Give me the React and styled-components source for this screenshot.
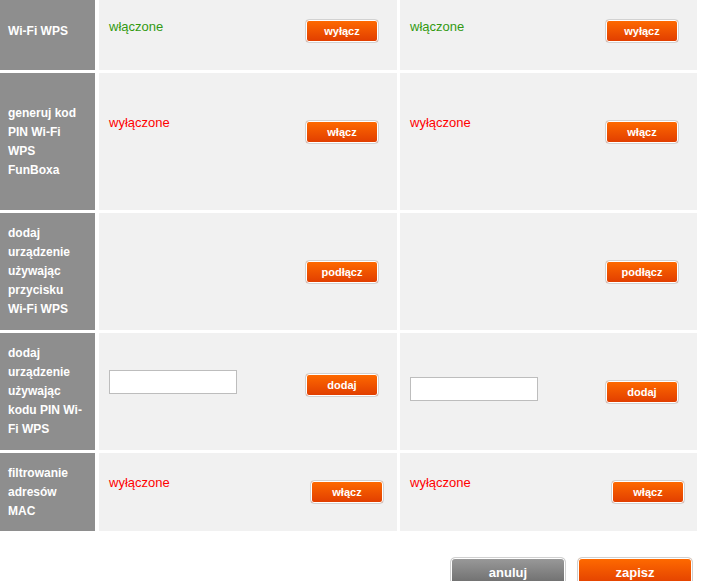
import React from "react";
import styled, { createGlobalStyle } from "styled-components";

const GlobalStyle = createGlobalStyle`
  html, body {
    margin: 0;
    padding: 0;
    background: #ffffff;
    overflow: hidden;
  }
  body {
    font-family: "Liberation Sans", Arial, sans-serif;
  }
`;

const Page = styled.div`
  width: 701px;
  margin-top: -8px;
`;

const Table = styled.div`
  display: flex;
  flex-direction: column;
  gap: 3px;
`;

const Row = styled.div`
  display: grid;
  grid-template-columns: 96px 298px 297px;
  column-gap: 3px;
  height: ${(p) => p.$height}px;
`;

const Label = styled.div`
  width: 95px;
  box-sizing: border-box;
  background: #8e8e8e;
  color: #ffffff;
  font-size: 12px;
  font-weight: bold;
  line-height: 19px;
  padding: 0 8px;
  white-space: nowrap;
  display: flex;
  flex-direction: column;
  justify-content: center;
`;

const DataCell = styled.div`
  background: #f1f1f1;
  box-sizing: border-box;
  display: flex;
  flex-direction: column;
  justify-content: center;
  padding: 0 ${(p) => p.$right}px ${(p) => p.$extra}px 10px;
`;

const CellLine = styled.div`
  display: flex;
  justify-content: space-between;
  align-items: flex-start;
`;

const Status = styled.span`
  font-size: 13px;
  line-height: 15px;
  margin-top: ${(p) => p.$offset}px;
  color: ${(p) => (p.$on ? "#339a12" : "#ff0000")};
`;

const PinInput = styled.input`
  box-sizing: border-box;
  width: 128px;
  height: 24px;
  margin: -3px 0 0 0;
  border: 1px solid #bdbdbd;
  background: #ffffff;
  padding: 2px 4px;
  font: 12px "Liberation Sans", Arial, sans-serif;
`;

const SmallButton = styled.button`
  box-sizing: border-box;
  width: 74px;
  height: 24px;
  margin: 0;
  padding: 0;
  border: 1px solid #d2d2d2;
  border-radius: 4px;
  box-shadow: inset 0 0 0 1px #ffffff;
  background: linear-gradient(#ff6b00, #e03c00);
  color: #ffffff;
  font: bold 11px "Liberation Sans", Arial, sans-serif;
  cursor: pointer;
`;

const ButtonBar = styled.div`
  display: flex;
  justify-content: flex-end;
  gap: 11px;
  padding-right: 8px;
  margin-top: 26px;
`;

const BigButton = styled.button`
  box-sizing: border-box;
  width: 116px;
  height: 30px;
  margin: 0;
  padding: 0;
  border: 1px solid #d0d0d0;
  border-radius: 5px;
  box-shadow: inset 0 0 0 1px #ffffff;
  background: ${(p) =>
    p.$variant === "grey"
      ? "linear-gradient(#9a9a9a, #6a6a6a)"
      : "linear-gradient(#ff6b00, #e03c00)"};
  color: #ffffff;
  font: bold 13px "Liberation Sans", Arial, sans-serif;
  cursor: pointer;
`;

const rows = [
  {
    height: 78,
    label: ["Wi-Fi WPS"],
    cells: [
      { status: "on", offset: 0, action: "wyłącz", right: 18, extra: 0 },
      { status: "on", offset: 0, action: "wyłącz", right: 18, extra: 0 },
    ],
  },
  {
    height: 137,
    label: ["generuj kod", "PIN Wi-Fi", "WPS", "FunBoxa"],
    cells: [
      { status: "off", offset: -5, action: "włącz", right: 18, extra: 20 },
      { status: "off", offset: -5, action: "włącz", right: 18, extra: 20 },
    ],
  },
  {
    height: 117,
    label: ["dodaj", "urządzenie", "używając", "przycisku", "Wi-Fi WPS"],
    cells: [
      { action: "podłącz", right: 18, extra: 0 },
      { action: "podłącz", right: 18, extra: 0 },
    ],
  },
  {
    height: 117,
    label: ["dodaj", "urządzenie", "używając", "kodu PIN Wi-", "Fi WPS"],
    cells: [
      { input: true, action: "dodaj", right: 18, extra: 13 },
      { input: true, action: "dodaj", right: 18, extra: 0 },
    ],
  },
  {
    height: 78,
    label: ["filtrowanie", "adresów", "MAC"],
    cells: [
      { status: "off", offset: -5, action: "włącz", right: 13, extra: 0 },
      { status: "off", offset: -5, action: "włącz", right: 12, extra: 0 },
    ],
  },
];

function Cell({ cell }) {
  return (
    <DataCell $right={cell.right} $extra={cell.extra}>
      <CellLine>
        {cell.status ? (
          <Status $on={cell.status === "on"} $offset={cell.offset}>
            {cell.status === "on" ? "włączone" : "wyłączone"}
          </Status>
        ) : cell.input ? (
          <PinInput type="text" />
        ) : (
          <span />
        )}
        <SmallButton type="button">{cell.action}</SmallButton>
      </CellLine>
    </DataCell>
  );
}

export default function App() {
  return (
    <Page>
      <GlobalStyle />
      <Table>
        {rows.map((row, i) => (
          <Row key={i} $height={row.height}>
            <Label>
              {row.label.map((line, j) => (
                <div key={j}>{line}</div>
              ))}
            </Label>
            {row.cells.map((cell, k) => (
              <Cell key={k} cell={cell} />
            ))}
          </Row>
        ))}
      </Table>
      <ButtonBar>
        <BigButton type="button" $variant="grey">
          anuluj
        </BigButton>
        <BigButton type="button">zapisz</BigButton>
      </ButtonBar>
    </Page>
  );
}
